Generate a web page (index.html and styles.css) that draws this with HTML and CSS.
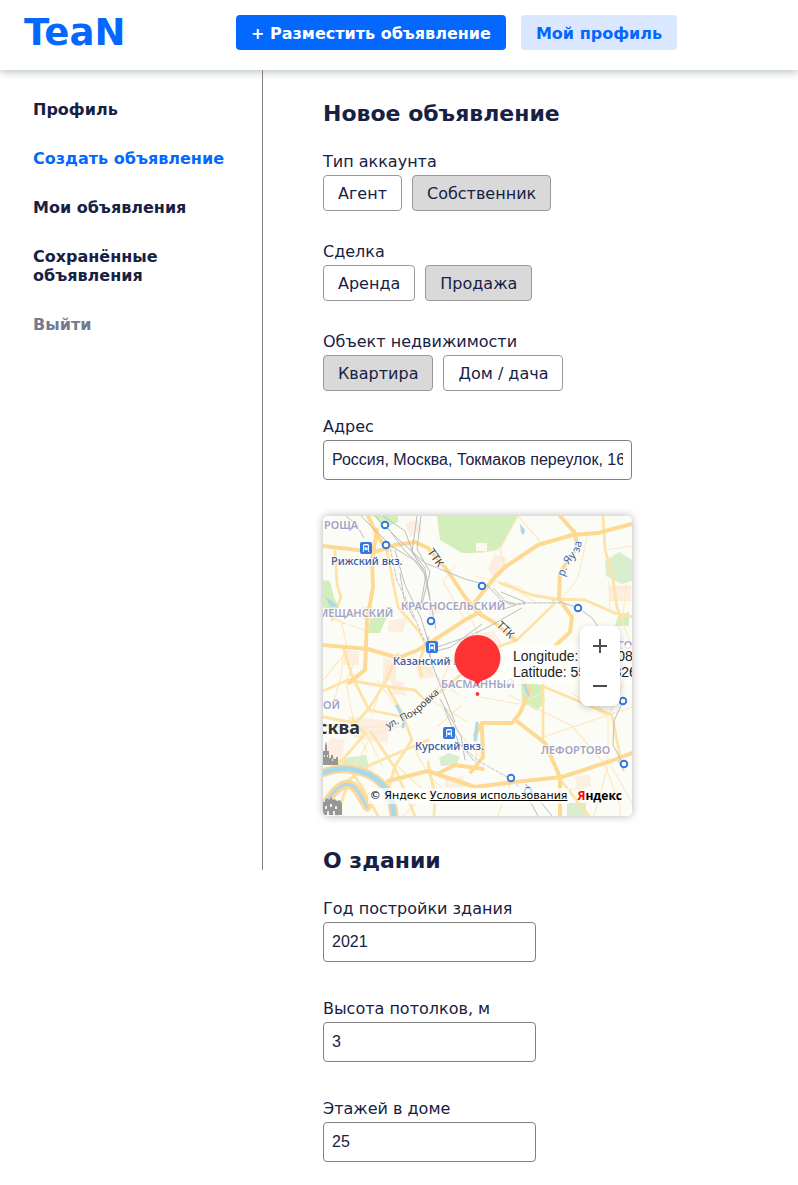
FILE: index.html
```html
<!DOCTYPE html>
<html lang="ru">
<head>
<meta charset="utf-8">
<meta name="viewport" content="width=device-width, initial-scale=1">
<title>TeaN — Новое объявление</title>
<link rel="stylesheet" href="styles.css">
</head>
<body>
<header class="header">
  <a class="logo" href="#">TeaN</a>
  <div class="header-actions">
    <button class="btn btn-primary" type="button">+ Разместить объявление</button>
    <button class="btn btn-light" type="button">Мой профиль</button>
  </div>
</header>
<div class="layout">
  <nav class="sidebar">
    <a class="nav-link" href="#">Профиль</a>
    <a class="nav-link active" href="#">Создать объявление</a>
    <a class="nav-link" href="#">Мои объявления</a>
    <a class="nav-link" href="#">Сохранённые объявления</a>
    <a class="nav-link muted" href="#">Выйти</a>
  </nav>
  <main class="content">
    <h1 class="title">Новое объявление</h1>
    <form class="form">
      <div class="choices">
        <div class="field" role="group" aria-labelledby="account">
          <span class="label" id="account">Тип аккаунта</span>
          <div class="options">
            <button class="option" type="button" aria-pressed="false">Агент</button>
            <button class="option selected" type="button" aria-pressed="true">Собственник</button>
          </div>
        </div>
        <div class="field" role="group" aria-labelledby="deal">
          <span class="label" id="deal">Сделка</span>
          <div class="options">
            <button class="option" type="button" aria-pressed="false">Аренда</button>
            <button class="option selected" type="button" aria-pressed="true">Продажа</button>
          </div>
        </div>
        <div class="field" role="group" aria-labelledby="object">
          <span class="label" id="object">Объект недвижимости</span>
          <div class="options">
            <button class="option selected" type="button" aria-pressed="true">Квартира</button>
            <button class="option" type="button" aria-pressed="false">Дом / дача</button>
          </div>
        </div>
      </div>
      <div class="field address">
        <label class="label" for="address">Адрес</label>
        <input class="input" id="address" type="text" value="Россия, Москва, Токмаков переулок, 16">
      </div>
      <div class="map">
        <svg class="map-canvas" viewBox="0 0 309 300" preserveAspectRatio="xMidYMid slice" role="img" aria-label="Карта Москвы">
          <defs>
            <g id="stop"><circle r="3.3" fill="#fff" stroke="#3378e0" stroke-width="1.9"/></g>
            <g id="station">
              <rect x="-6" y="-6" width="12" height="12" rx="2" fill="#3378e0"/>
              <path d="M-2-4h4l1 1v5h-6v-5z" fill="#fff"/>
              <path d="M-2 2l-1 2M2 2l1 2" stroke="#fff"/>
              <path d="M-2-2.500h4v2h-4zM-2 .5h1v1h-1zM1 .5h1v1H1z" fill="#3378e0"/>
            </g>
          </defs>
          <rect width="309" height="300" fill="#fcfcf6"/>
          <g fill="#d2efbb">
            <path d="M114 0l3 24 22 13 18 0 15-3 5-2L195 0z"/>
            <path d="M51 0h24v6l-14 6zM0 64l7 1 4 17 5 9-9 6-7-6zM47 103l18-5-8 19H45zM295 100l11-4v14h-14z"/>
            <path d="M198 166l21 3 3 16-8 10-15-9z"/>
          </g>
          <g fill="#d9edcf">
            <path d="M282 45l14-9 13 8v21l-10 3-16-8z"/>
            <path d="M22 242l21-3 3 12-6 5-22-6zM116 242l10-5 11 4-4 8-15 1zM244 287h19v13h-19z"/>
          </g>
          <path d="M153 27h11v8h-11z" fill="#fafaf1"/>
          <g fill="#fdeee2">
            <path d="M171 38l13 4-5 17-8 4-6-9zM103 90l11-4 5 9-12 5zM39 91h11v12H38zM66 104l18-2-4 15-16-2zM22 135h14v14H20zM60 142l14 3-1 22-13-4zM286 70l22-1v16h-22zM151 118l20-3 9 14-22 14zM82 7l13-3 4 11-12 6zM24 200l44 5-4 22-32-5zM7 222l15 2-3 18-18-4zM91 145l16-2 4 18-15 2zM68 164l12 2 4 14-14-2zM122 262l18-2 2 11-20 1zM252 261l15-2 1 11-14 4z"/>
          </g>
          <g fill="none" stroke-linecap="round" stroke-linejoin="round">
            <g stroke="#fde9c4" stroke-width="1.200">
              <path d="M12 34l2 34 4 13-9 22 32 11M0 164l14-17 14-16M0 96l18 9 6 25M10 188l8-28 3-29M177 34l-25 3M177 34L195 0M177 34l5 17M195 0l22 25M264 21l-9 41-14 18M142 104l-22-39 12-15M140 85l16 35 9 10M200 72l-48-12M182 66l30 20M309 30l-27 4M288 72h21M286 84h23M303 68l-3 33M299 104l10 28M286 66l1 28M249 177l36 24v43l24 43M186 179l63 31 32 37M152 180l43 8 24-11M281 247l16 42v11M235 143l50 58 24-53M155 213l-3 41M0 210l35 2M32 144l-9 23 8 40M67 144l-18 54M109 185l34 20M115 210l23-20M59 250l-18-38 30-3M138 125l-24 49M78 210l-29 8-21 40M90 230l17 31 26 23M55 165l24 34M31 208l13 28M100 150l36 29M74 250l30 27-24 23M187 268l-12 32M285 250l-14 50M221 281l33-9M220 221l89-30M130 210l26 30"/>
            </g>
            <g stroke="#fde3a6" stroke-width="2.800">
              <path d="M64 34l5 27 6 30 20 23 8 14-8 20 4 12"/>
              <path d="M177 67l32 12 23 4 30 1 30 13 17 4M230 83v6l-36 35-22 8M280 0l2 34 7 23 5 34 5 13"/>
              <path d="M12 34l2 34 4 13-9 23M0 175l25-11 34 6 33 4 13 13 14-13 22-18M0 201l32 6 13-13 17-27 13-29M64 170l15 27 10 27-17 26-7 24 7 26"/>
              <path d="M42 154l-16 11M20 130l9 30 17 34 40 8M0 238l22 9 17 24 16 29M14 250l28-32-12-14M105 246l7 34-1 20M92 300l-20-48-24-36M14 300l12-36 19-14 60-26M220 166v58M298 245l-9-46-70-29M236 262l30 38"/>
            </g>
            <g stroke="#fed993" stroke-width="4">
              <path d="M0 30l52 6 20-7 20-3 13 6 19 22 18 27 13 16 17 10 20 17"/>
              <path d="M45 0l9 19 10 15M54 14l-5 30 1 27-6 33-2 50-16 13"/>
              <path d="M0 129l45 4 30 9 20-8 24-15 23-15 15-8M152 86l20-25 10-10 33-22 34-10 26-2 34-9"/>
              <path d="M237 0l15 17 2 14-17 26-1 26 13 18-2 15-15 14"/>
              <path d="M152 219l7-12h30l8-10 10-23-8-11M159 211l1 30-12 15M195 206l27 21 15 34v39M65 265l40-10 47 16 40-5 47-5 46-15 24-9"/>
              <path d="M114 258l18-9 28 4"/>
            </g>
            <path d="M0 257c20-9 45-3 59 11 9 9 11 21 12 32M0 291c7-10 11-17 20-22 12-4 16 9 24 22" stroke="#fdd899" stroke-width="9"/>
            <path d="M0 257c20-9 45-3 59 11 9 9 11 21 12 32" stroke="#a5daed" stroke-width="5"/>
            <path d="M0 291c7-10 11-17 20-22 12-4 16 9 24 22M74 190l7 14-1 7M154 207l-2 17M201 168l4 10" stroke="#add9eb" stroke-width="3"/>
          </g>
          <path d="M197 8l5 6-1 5-3-2zM2 80l10 8 4 3-9-1z" fill="#a9d6f3"/>
          <g fill="none" stroke="#bdbdbd" stroke-width="1">
            <path d="M52 0l22 22 28 25 40 16 22 6 14 15 15 4 12-1h35l16 5 14 11 8 12"/>
            <path d="M38 0l30 30 23 14 10 13 5 22 7 34M94 0l-5 36 14 23-6 34"/>
            <path d="M98 0l-4 33 13 23-8 32M67 31l7 34 15 30 13 32 8 22M72 34l10 35 16 33 8 26M62 8l19 26 21 20 5 28"/>
            <path d="M23 0l10 8 8 14M60 0l22 15 8 22 13 16M109 133l40-14 18-9 32-18M110 136l18-5 31-23M77 57l4 26 10 20M117 183l21 37 4 24M121 192l15 35 15 18M131 224l26 22 31 17 15 15 12 22M105 120l3 26 24 60M170 72l15 16h17M178 76l24 10-24 8M300 185l-9 20-1 24 10 19M295 244l6 11M216 284l13 16M202 268l19 15"/>
          </g>
          <path d="M67 31l7 34 15 30 13 32M131 224l26 22 31 17 15 15M193 88h47" fill="none" stroke="#fff" stroke-width="1" stroke-dasharray="2 3"/>
          <g class="map-area">
            <text x="1" y="13">РОЩА</text><text x="-5" y="101">МЕЩАНСКИЙ</text><text x="78" y="94">КРАСНОСЕЛЬСКИЙ</text>
            <text x="118" y="172">БАСМАННЫЙ</text><text x="0" y="193">ОЙ</text><text x="218" y="238">ЛЕФОРТОВО</text><text x="294" y="133">СО</text>
          </g>
          <g class="map-station">
            <text x="8" y="49">Рижский вкз.</text><text x="70" y="149">Казанский вкз.</text><text x="92" y="234">Курский вкз.</text>
          </g>
          <text class="map-city" x="-5" y="218">сква</text>
          <g class="map-road">
            <text transform="translate(104 36) rotate(55)">ТТК</text><text transform="translate(173 110) rotate(43)">ТТК</text>
            <text class="small" transform="translate(65 213) rotate(-27)">ул. По</text><text class="small" transform="translate(92 200) rotate(-43)">кровка</text>
          </g>
          <g class="map-river"><text transform="translate(241 61) rotate(-70)">р.</text><text transform="translate(245 49) rotate(-48)">Яу</text><text transform="translate(256 37) rotate(-75)">за</text></g>
          <g fill="#969696">
            <path d="M0 247v-12h2v-5l1-5 1 5v5h2v7h2v-3h2v4h3v-2h2v8H0z"/>
            <path d="M0 299v-13h2v-2l2-2 2 2 2-3 2 3 2-1 2 2 3-1 2 4v11z"/>
            <path d="M2 290h2v3H2zM7 288h2v3H7zM12 290h2v3h-2zM1 239h1v2H1zM4 239h1v2H4zM9 243h1v2H9zM4 295h2v4H4zM10 295h2v4h-2z" fill="#eee"/>
          </g>
          <use href="#stop" x="62" y="9"/><use href="#stop" x="63" y="29"/><use href="#stop" x="108" y="105"/><use href="#stop" x="159" y="70"/><use href="#stop" x="255" y="92"/><use href="#stop" x="300" y="185"/><use href="#stop" x="301" y="248"/><use href="#stop" x="188" y="262"/><use href="#stop" x="205" y="275"/>
          <use href="#station" x="43" y="32"/><use href="#station" x="109" y="131"/><use href="#station" x="126" y="217"/>
          <circle cx="154.500" cy="142" r="24" fill="#fff" fill-opacity=".5"/>
          <circle cx="154.500" cy="142" r="23" fill="#f33"/>
          <path d="M146 163q6 1 8.500 7 2.500-6 8.500-7z" fill="#f33"/>
          <circle cx="154.500" cy="178" r="2.600" fill="#f33" stroke="#fff" stroke-width="1.400"/>
        </svg>
        <div class="coords"><span>Longitude: 37.6708</span><span>Latitude: 55.771826</span></div>
        <div class="zoom">
          <button class="zoom-btn" type="button" aria-label="Приблизить"><svg width="16" height="16" viewBox="0 0 16 16"><path d="M8 1v14M1 8h14"/></svg></button>
          <button class="zoom-btn" type="button" aria-label="Отдалить"><svg width="16" height="16" viewBox="0 0 16 16"><path d="M1 8h14"/></svg></button>
        </div>
        <div class="credits">
          <span class="copyright">© Яндекс <a href="#">Условия использования</a></span>
          <a class="yandex" href="#"><span class="yandex-first">Я</span>ндекс</a>
        </div>
      </div>
      <h2 class="title">О здании</h2>
      <div class="building">
        <div class="field">
          <label class="label" for="year">Год постройки здания</label>
          <input class="input short" id="year" type="text" value="2021">
        </div>
        <div class="field">
          <label class="label" for="ceiling">Высота потолков, м</label>
          <input class="input short" id="ceiling" type="text" value="3">
        </div>
        <div class="field">
          <label class="label" for="floors">Этажей в доме</label>
          <input class="input short" id="floors" type="text" value="25">
        </div>
      </div>
    </form>
  </main>
</div>
</body>
</html>
```
FILE: styles.css
```css
* { box-sizing: border-box; }

body {
  margin: 0;
  background: #fff;
  color: #172144;
  font: 16px/20px Verdana, "DejaVu Sans", sans-serif;
}

button { font: inherit; color: inherit; cursor: pointer; }

.header {
  position: relative;
  display: grid;
  grid-template-columns: 212px 1fr;
  align-items: start;
  padding: 15px 24px 19px;
  background: #fff;
  box-shadow: 0 2px 8px rgba(23, 50, 68, .3);
}

.logo {
  color: #0468ff;
  font-size: 37px;
  line-height: 36px;
  font-weight: 700;
  text-decoration: none;
}

.header-actions { display: flex; gap: 15px; }

.btn {
  padding: 9px 15px 7px;
  border: 0;
  border-radius: 4px;
  font-weight: 700;
  line-height: 19px;
  white-space: nowrap;
}
.btn-primary { background: #0468ff; color: #fff; }
.btn-light { background: #dae7ff; color: #0468ff; }

.layout { display: flex; align-items: flex-start; }

.sidebar {
  position: relative;
  display: flex;
  flex: 0 0 263px;
  flex-direction: column;
  gap: 30px;
  min-height: 800px;
  padding: 30px 30px 31px 33px;
  border-right: 1px solid #808080;
  font-weight: 700;
  line-height: 19px;
}

.nav-link { color: #172144; text-decoration: none; }
.nav-link.active { color: #0468ff; }
.nav-link.muted { color: #747a8f; }

.content { flex: 1; padding: 29px 60px 24px; }

.title { margin: 0 0 22px; font-size: 22px; line-height: 30px; }

.label { line-height: 22px; }
.choices { display: grid; gap: 30px; }
.field { display: flex; flex-direction: column; align-items: flex-start; gap: 2px; }
.options { display: flex; gap: 10px; }

.option {
  padding: 8px 14px 6px;
  border: 1px solid #999;
  border-radius: 4px;
  background: #fff;
}
.option.selected { background: #d9d9d9; }

.input {
  width: 100%;
  height: 40px;
  padding: 0 8px;
  border: 1px solid #808080;
  border-radius: 4px;
  background: #fff;
  color: #172144;
  font: 16px "Liberation Sans", Arial, sans-serif;
}
.input.short { max-width: 213px; }

.address { max-width: 309px; margin-top: 25px; }

.map {
  position: relative;
  max-width: 309px;
  height: 300px;
  margin: 36px 0 30px;
  overflow: hidden;
  border-radius: 5px;
  box-shadow: 0 0 8px rgba(0, 0, 0, .3);
}
.map-canvas { display: block; width: 100%; height: 100%; font-family: "Noto Sans", sans-serif; }
.map-canvas text { stroke: #fff; stroke-width: 2px; stroke-opacity: .7; paint-order: stroke; }
.map-area { fill: #a4a4c4; font-size: 11px; font-weight: 600; }
.map-station { fill: #3158a6; font-size: 11px; font-weight: 500; }
.map-city { fill: #333; font-size: 18px; font-weight: 700; }
.map-road { fill: #444; font-size: 11px; }
.map-road .small { font-size: 10px; }
.map-river { fill: #3870b8; font-size: 11px; }

.coords {
  position: absolute;
  top: 129px;
  left: 182px;
  right: 0;
  display: flex;
  flex-direction: column;
  padding: 3px 0 4px 8px;
  overflow: hidden;
  background: rgba(255, 255, 255, .75);
  color: #222;
  font: 14px/16px "Liberation Sans", Arial, sans-serif;
  white-space: nowrap;
}

.zoom {
  position: absolute;
  top: 110px;
  right: 12px;
  width: 40px;
  border-radius: 8px;
  background: #fff;
  box-shadow: 0 2px 6px rgba(0, 0, 0, .2);
}
.zoom-btn {
  display: grid;
  place-items: center;
  width: 40px;
  height: 40px;
  padding: 0;
  border: 0;
  background: none;
}
.zoom-btn path { fill: none; stroke: #4d4d4d; stroke-width: 2; }

.credits {
  position: absolute;
  right: 10px;
  bottom: 12px;
  display: flex;
  align-items: center;
  gap: 8px;
  color: #000;
  line-height: 16px;
  white-space: nowrap;
}
.copyright { padding: 0 2px; background: rgba(255, 255, 255, .7); font-size: 11px; }
.copyright a { color: inherit; }
.yandex {
  color: #000;
  font: 700 12px/16px "Open Sans", sans-serif;
  text-decoration: none;
}
.yandex-first { color: #f00; }

.building { display: grid; gap: 36px; }
```
